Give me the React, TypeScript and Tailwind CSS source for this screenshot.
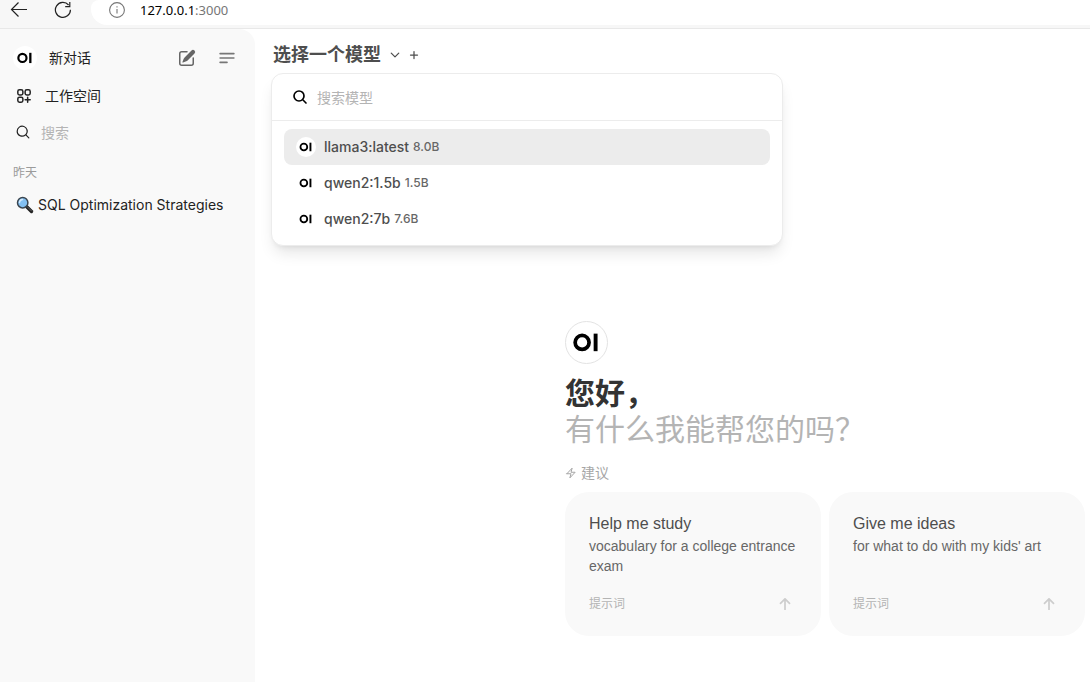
import React, { useState } from 'react';

const models = [
  { name: 'llama3:latest', size: '8.0B' },
  { name: 'qwen2:1.5b', size: '1.5B' },
  { name: 'qwen2:7b', size: '7.6B' }
];

const suggestions = [
  { title: 'Help me study', description: 'vocabulary for a college entrance exam' },
  { title: 'Give me ideas', description: "for what to do with my kids' art" }
];

function Logo({ className }: { className: string }) {
  return (
    <svg viewBox="0 0 43 43" className={`shrink-0 rounded-full bg-white ${className}`} aria-hidden="true">
      <circle cx="16.9" cy="21.4" r="7.3" fill="none" stroke="black" strokeWidth="3.9" />
      <rect x="29" y="12.2" width="4.1" height="18.4" fill="black" />
    </svg>
  );
}

function OutlineIcon({ d, className, strokeWidth = 2 }: { d: string; className: string; strokeWidth?: number }) {
  return (
    <svg
      viewBox="0 0 24 24"
      fill="none"
      stroke="currentColor"
      strokeWidth={strokeWidth}
      strokeLinecap="round"
      strokeLinejoin="round"
      className={`shrink-0 ${className}`}
      aria-hidden="true"
    >
      <path d={d} />
    </svg>
  );
}

function BrowserBar() {
  return (
    <header className="flex h-[29px] shrink-0 items-start border-b border-[#e8e8e8] bg-[#f7f7f7] pl-2.5 font-['Noto_Sans',sans-serif]">
      <button aria-label="返回" className="mt-px">
        <svg viewBox="0 0 18 18" className="h-[18px] w-[18px]" fill="none" stroke="#222" strokeWidth="1.2">
          <path d="M17 8.5H1.5M8.5 1.5l-7 7 7 7" />
        </svg>
      </button>
      <button aria-label="刷新" className="ml-[26px] mt-px">
        <svg viewBox="0 0 18 18" className="h-[18px] w-[18px]" fill="none" stroke="#222" strokeWidth="1.2">
          <path d="M16.4 8.8A7.5 7.5 0 1 1 14.6 4M15.8 1v4.6h-4.6" />
        </svg>
      </button>
      <div className="ml-[19px] flex h-[25px] flex-1 items-start rounded-bl-2xl rounded-tl-lg bg-white pl-[18px]">
        <svg viewBox="0 0 16 16" className="mt-0.5 h-4 w-4" fill="none" stroke="#767676" strokeWidth="1.1" aria-hidden="true">
          <circle cx="8" cy="8" r="7.4" />
          <path d="M8 7v4.5M8 4.2v1.4" />
        </svg>
        <span className="ml-[15px] text-[13px] leading-5 text-black">
          127.0.0.1<span className="text-[#767676]">:3000</span>
        </span>
      </div>
    </header>
  );
}

function Sidebar() {
  return (
    <aside className="w-[255px] shrink-0 rounded-tr-2xl bg-[#f9f9f9] text-[#222]">
      <div className="flex items-center pl-[13px] pr-[18px] pt-[17px]">
        <a href="#" className="flex flex-1 items-center gap-3 text-sm leading-6">
          <Logo className="h-6 w-6" />
          新对话
        </a>
        <button aria-label="编辑" className="text-[#666]">
          <svg viewBox="0 0 20 20" fill="currentColor" className="h-5 w-5">
            <path d="m5.433 13.917 1.262-3.155A4 4 0 0 1 7.58 9.42l6.92-6.918a2.121 2.121 0 0 1 3 3l-6.92 6.918c-.383.383-.84.685-1.343.886l-3.154 1.262a.5.5 0 0 1-.65-.65Z" />
            <path d="M3.5 5.75c0-.69.56-1.25 1.25-1.25H10A.75.75 0 0 0 10 3H4.75A2.75 2.75 0 0 0 2 5.75v9.5A2.75 2.75 0 0 0 4.75 18h9.5A2.75 2.75 0 0 0 17 15.25V10a.75.75 0 0 0-1.5 0v5.25c0 .69-.56 1.25-1.25 1.25h-9.5c-.69 0-1.25-.56-1.25-1.25v-9.5Z" />
          </svg>
        </button>
        <button aria-label="菜单" className="ml-5 text-[#777]">
          <OutlineIcon className="h-5 w-5" d="M3.75 6.75h16.5M3.75 12h16.5m-16.5 5.25H12" />
        </button>
      </div>

      <a href="#" className="mt-3.5 flex items-center gap-3 pl-[15px] text-sm leading-6">
        <OutlineIcon
          className="h-[18px] w-[18px]"
          d="M13.5 16.875h3.375m0 0h3.375m-3.375 0V13.5m0 3.375v3.375M6 10.5h2.25a2.25 2.25 0 0 0 2.25-2.25V6a2.25 2.25 0 0 0-2.25-2.25H6A2.25 2.25 0 0 0 3.75 6v2.25A2.25 2.25 0 0 0 6 10.5Zm0 9.75h2.25A2.25 2.25 0 0 0 10.5 18v-2.25a2.25 2.25 0 0 0-2.25-2.25H6a2.25 2.25 0 0 0-2.25 2.25V18A2.25 2.25 0 0 0 6 20.25Zm9.75-9.75H18a2.25 2.25 0 0 0 2.25-2.25V6A2.25 2.25 0 0 0 18 3.75h-2.25A2.25 2.25 0 0 0 13.5 6v2.25a2.25 2.25 0 0 0 2.25 2.25Z"
        />
        工作空间
      </a>

      <label className="mt-3 flex items-center gap-2.5 pl-[15px]">
        <svg viewBox="0 0 20 20" fill="currentColor" className="h-4 w-4 shrink-0" aria-hidden="true">
          <path d="M9 3.5a5.5 5.5 0 1 0 0 11 5.5 5.5 0 0 0 0-11ZM2 9a7 7 0 1 1 12.452 4.391l3.328 3.329a.75.75 0 1 1-1.06 1.06l-3.329-3.328A7 7 0 0 1 2 9Z" />
        </svg>
        <input aria-label="搜索" placeholder="搜索" className="h-6 w-40 bg-transparent text-sm outline-none placeholder:text-[#b4b4b4]" />
      </label>

      <h2 className="mt-[19px] pl-[13px] text-xs leading-5 text-[#9b9b9b]">昨天</h2>
      <a href="#" className="mt-2.5 flex items-center gap-1 pl-4 text-sm leading-6">
        <svg viewBox="0 0 18 18" className="h-[18px] w-[18px] shrink-0" aria-hidden="true">
          <path d="M10.5 10.5l5 5" stroke="#222" strokeWidth="3.4" strokeLinecap="round" />
          <path d="M11.5 11l4 4" stroke="#666" strokeWidth="1" strokeLinecap="round" />
          <circle cx="6.7" cy="6.7" r="5.2" fill="#83c0f2" stroke="#3b4650" strokeWidth="1.5" />
          <path d="M3.5 6.5a3.3 3.3 0 0 1 3-3" fill="none" stroke="#d5ecff" strokeWidth="1.4" strokeLinecap="round" />
        </svg>
        SQL Optimization Strategies
      </a>
    </aside>
  );
}

function ModelSelector() {
  const [selected, setSelected] = useState(0);
  const [query, setQuery] = useState('');

  return (
    <div className="relative self-start pl-[18px] pt-3">
      <button className="flex items-center text-lg font-bold leading-7 text-[#4e4e4e]">
        选择一个模型
        <OutlineIcon className="ml-2 h-3 w-3" strokeWidth={2.5} d="m19.5 8.25-7.5 7.5-7.5-7.5" />
        <OutlineIcon className="ml-[7px] h-3 w-3" strokeWidth={2.5} d="M12 5v14M5 12h14" />
      </button>

      {/* Model menu */}
      <div className="absolute left-4 top-11 w-[512px] rounded-xl border border-[#ececec] bg-white shadow-lg">
        <label className="flex h-[47px] items-center gap-[9px] border-b border-[#ececec] px-5">
          <OutlineIcon
            className="h-4 w-4 text-black"
            strokeWidth={2.5}
            d="m21 21-5.197-5.197m0 0A7.5 7.5 0 1 0 5.196 5.196a7.5 7.5 0 0 0 10.607 10.607Z"
          />
          <input
            aria-label="搜索模型"
            placeholder="搜索模型"
            value={query}
            onChange={(e) => setQuery(e.target.value)}
            className="h-6 flex-1 bg-transparent text-sm outline-none placeholder:text-[#b4b4b4]"
          />
        </label>
        <div className="px-3 py-2">
          {models
            .filter((model) => model.name.includes(query))
            .map((model, index) => (
              <button
                key={model.name}
                onClick={() => setSelected(index)}
                className={`flex h-9 w-full items-center rounded-lg pl-3 text-sm font-medium text-[#4e4e4e] ${
                  selected === index ? 'bg-[#ececec]' : 'bg-white'
                }`}
              >
                <Logo className="mr-2 h-5 w-5" />
                {model.name}
                <span className="ml-1 text-xs text-[#676767]">{model.size}</span>
              </button>
            ))}
        </div>
      </div>
    </div>
  );
}

function Welcome() {
  return (
    <section className="pl-[310px] pr-[5px] pt-[252px]">
      <Logo className="h-[43px] w-[43px] border border-[#e3e3e3]" />
      <h1 className="mt-[11px] text-3xl leading-9 text-[#b4b4b4]">
        <span className="block font-bold text-[#333]">您好，</span>
        有什么我能帮您的吗？
      </h1>
      <h2 className="mt-4 flex items-center gap-1 text-sm leading-5 text-[#a6a6a6]">
        <OutlineIcon
          className="h-3 w-3"
          d="m3.75 13.5 10.5-11.25L12 10.5h8.25L9.75 21.75 12 13.5H3.75Z"
        />
        建议
      </h2>
      <div className="mt-[9px] grid grid-cols-2 gap-2 font-['Liberation_Sans','Noto_Sans_CJK_SC',sans-serif]">
        {suggestions.map((item) => (
          <button key={item.title} className="flex h-36 flex-col justify-between rounded-3xl bg-[#f9f9f9] px-6 py-5 text-left">
            <span>
              <span className="block text-base font-medium text-[#4e4e4e]">{item.title}</span>
              <span className="block text-sm leading-5 text-[#676767]">{item.description}</span>
            </span>
            <span className="flex w-full items-center justify-between pr-1.5 text-xs leading-6 text-[#b4b4b4]">
              提示词
              <svg viewBox="0 0 12 12" className="h-3 w-3" fill="none" stroke="#cdcdcd" strokeWidth="1.7" strokeLinecap="round" strokeLinejoin="round" aria-hidden="true">
                <path d="M6 11.5V1M1.5 5.3L6 .8l4.5 4.5" />
              </svg>
            </span>
          </button>
        ))}
      </div>
    </section>
  );
}

export default function App() {
  return (
    <div className="flex min-h-screen flex-col bg-white font-['Inter','Noto_Sans_CJK_SC',sans-serif]">
      <BrowserBar />
      <div className="flex flex-1">
        <Sidebar />
        <main className="flex min-w-0 flex-1 flex-col">
          <ModelSelector />
          <Welcome />
        </main>
      </div>
    </div>
  );
}
